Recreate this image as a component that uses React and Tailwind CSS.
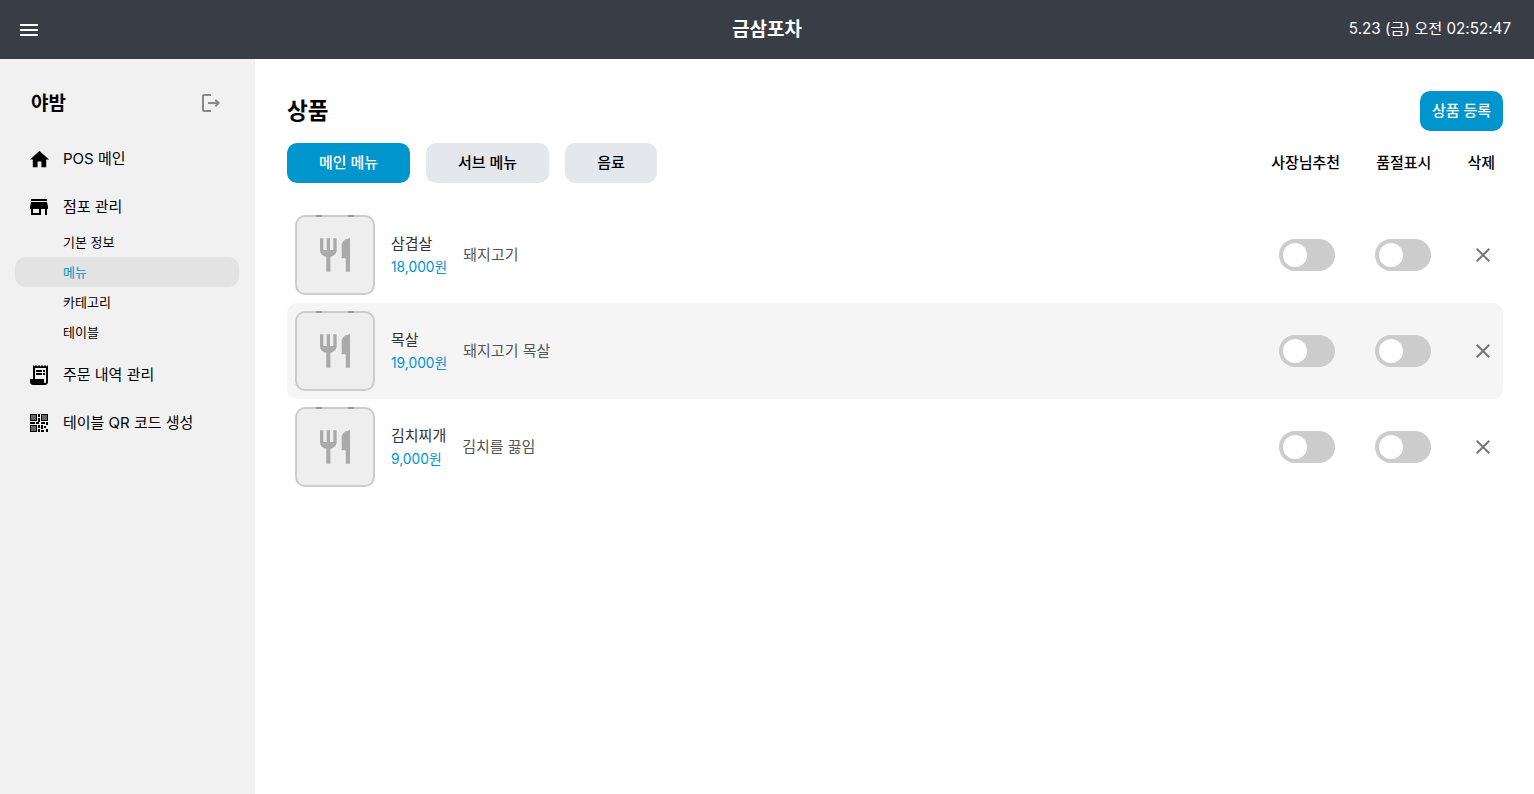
import React from "react";

const font = "font-['Inter','Noto_Sans_CJK_KR',sans-serif]";

function Icon({ d, className }) {
  return (
    <svg viewBox="0 0 24 24" fill="currentColor" className={className}>
      <path d={d} />
    </svg>
  );
}

const icons = {
  menu: "M3 18h18v-2H3v2zm0-5h18v-2H3v2zm0-7v2h18V6H3z",
  home: "M10 20v-6h4v6h5v-8h3L12 3 2 12h3v8z",
  store: "M20 4H4v2h16V4zm1 10v-2l-1-5H4l-1 5v2h1v6h10v-6h4v6h2v-6h1zm-9 4H6v-4h6v4z",
  receipt:
    "M19.5 3.5 18 2l-1.5 1.5L15 2l-1.5 1.5L12 2l-1.5 1.5L9 2 7.5 3.5 6 2v14H3v3c0 1.66 1.34 3 3 3h12c1.66 0 3-1.34 3-3V2l-1.5 1.5zM19 19c0 .55-.45 1-1 1s-1-.45-1-1v-3H8V5h11v14zM9 7h6v2H9zm7 0h2v2h-2zM9 10h6v2H9zm7 0h2v2h-2z",
  logout:
    "M17 8l-1.41 1.41L17.17 11H9v2h8.17l-1.58 1.58L17 16l4-4zM5 5h7V3H5c-1.1 0-2 .9-2 2v14c0 1.1.9 2 2 2h7v-2H5z",
  restaurant:
    "M11 9H9V2H7v7H5V2H3v7c0 2.12 1.66 3.84 3.75 3.97V22h2.5v-9.03C11.34 12.84 13 11.12 13 9V2h-2v7zm5-3v8h2.5v8H21V2c-2.76 0-5 2.24-5 4z",
  close:
    "M19 6.41 17.59 5 12 10.59 6.41 5 5 6.41 10.59 12 5 17.59 6.41 19 12 13.41 17.59 19 19 17.59 13.41 12z",
};

const products = [
  { name: "삼겹살", price: "18,000원", desc: "돼지고기" },
  { name: "목살", price: "19,000원", desc: "돼지고기 목살", hover: true },
  { name: "김치찌개", price: "9,000원", desc: "김치를 끓임" },
];

// qr icon from the reference: three finder squares with grey middles plus loose modules
function QrIcon() {
  return (
    <svg viewBox="0 0 18 18" className="h-[18px] w-[18px] text-black" fill="currentColor">
      <path d="M0 0h7v7H0zM11 0h7v7h-7zM0 11h7v7H0z" />
      <path fill="#666666" d="M1 1h5v5H1zM12 1h5v5h-5zM1 12h5v5H1z" />
      <path d="M8 0h2v3H8zM8 4h2v4H8zM0 8h5v2H0zM6 8h3v2H6zM11 8h4v2h-4zM16 8h2v3h-2zM8 11h2v3H8zM11 11h2v4h-2zM14 12h2v2h-2zM8 15h2v3H8zM11 16h3v2h-3zM16 15h2v3h-2z" />
    </svg>
  );
}

function NavItem({ icon, label }) {
  return (
    <div className="flex h-12 items-center pl-[27px]">
      <div className="flex h-6 w-6 items-center justify-center">{icon}</div>
      <span className="ml-3 text-[15px] text-black">{label}</span>
    </div>
  );
}

function SubItem({ label, active }) {
  return (
    <div
      className={
        "mr-[16px] ml-[15px] flex h-[30px] items-center rounded-[10px] pt-[2px] pl-[48px] text-[13px] " +
        (active ? "bg-[#e3e3e3] text-[#0095cd]" : "text-black")
      }
    >
      {label}
    </div>
  );
}

function Toggle() {
  return (
    <div className="flex h-8 w-14 items-center rounded-full bg-[#cccccc] pl-1">
      <div className="h-6 w-6 rounded-full bg-white" />
    </div>
  );
}

function Tab({ label, active, width }) {
  return (
    <button
      className={
        "h-10 rounded-[10px] text-[15px] font-medium " +
        width +
        (active ? " bg-[#0095cd] text-white" : " bg-[#e4e7eb] text-black")
      }
    >
      {label}
    </button>
  );
}

function ProductRow({ item }) {
  return (
    <div className={"flex h-24 items-center rounded-[10px] px-2 " + (item.hover ? "bg-[#f5f5f5]" : "")}>
      <div className="relative flex h-20 w-20 items-center justify-center rounded-[10px] border-2 border-[#cccccc] bg-[#eeeeee]">
        <div className="absolute top-[-2px] left-[19px] h-[2px] w-[6px] bg-[#999999]" />
        <div className="absolute top-[-2px] left-[51px] h-[2px] w-[6px] bg-[#999999]" />
        <Icon d={icons.restaurant} className="h-10 w-10 text-[#aaaaaa]" />
      </div>
      <div className="ml-4 flex flex-col pt-px">
        <span className="text-[15px] leading-6 text-[#333333]">{item.name}</span>
        <span className="mt-[-1px] text-[13.8px] leading-6 text-[#0095cd]">{item.price}</span>
      </div>
      <span className="ml-4 text-[15px] text-[#555555]">{item.desc}</span>
      <div className="ml-auto flex items-center">
        <Toggle />
        <div className="ml-10">
          <Toggle />
        </div>
        <Icon d={icons.close} className="ml-10 h-6 w-6 text-[#777777]" />
      </div>
    </div>
  );
}

export default function App() {
  return (
    <div className={"flex h-[794px] w-full flex-col overflow-hidden bg-white " + font}>
      <header className="grid h-[59px] shrink-0 grid-cols-3 items-center bg-[#393d46] px-[17px] text-white">
        <Icon d={icons.menu} className="h-6 w-6" />
        <h1 className="text-center text-[19px] leading-[30px] font-semibold">금삼포차</h1>
        <span className="pr-[6px] text-right text-[15.2px]">5.23 (금) 오전 02:52:47</span>
      </header>

      <div className="flex min-h-0 flex-1">
        <aside className="w-[255px] shrink-0 bg-[#f1f1f1] pt-[24px]">
          <div className="flex h-10 items-center justify-between pr-[32px] pl-[31px]">
            <span className="pt-[2px] text-[19px] font-semibold text-black">야밤</span>
            <Icon d={icons.logout} className="h-6 w-6 text-[#888888]" />
          </div>
          <div className="mt-[12px]">
            <NavItem icon={<Icon d={icons.home} className="h-[23px] w-[23px] text-black" />} label="POS 메인" />
            <NavItem icon={<Icon d={icons.store} className="h-6 w-6 text-black" />} label="점포 관리" />
            <div className="mt-[-4px] mb-[4px]">
              <SubItem label="기본 정보" />
              <SubItem label="메뉴" active />
              <SubItem label="카테고리" />
              <SubItem label="테이블" />
            </div>
            <NavItem icon={<Icon d={icons.receipt} className="h-6 w-6 text-black" />} label="주문 내역 관리" />
            <NavItem icon={<QrIcon />} label="테이블 QR 코드 생성" />
          </div>
        </aside>

        <main className="min-w-0 flex-1 pt-[32px] pr-[31px] pl-[32px]">
          <div className="flex h-10 items-center justify-between">
            <h2 className="text-[22.5px] font-semibold text-black">상품</h2>
            <button className="h-10 w-[83px] rounded-[10px] bg-[#0095cd] text-[15px] font-medium text-white">상품 등록</button>
          </div>
          <div className="mt-3 flex h-10 items-center">
            <div className="flex gap-4">
              <Tab label="메인 메뉴" active width="w-[123px]" />
              <Tab label="서브 메뉴" width="w-[123px]" />
              <Tab label="음료" width="w-[92px]" />
            </div>
            <div className="ml-auto flex items-center gap-9 pr-2 text-[15px] font-medium text-black">
              <span>사장님추천</span>
              <span>품절표시</span>
              <span>삭제</span>
            </div>
          </div>
          <div className="mt-6">
            {products.map((item) => (
              <ProductRow key={item.name} item={item} />
            ))}
          </div>
        </main>
      </div>
    </div>
  );
}
